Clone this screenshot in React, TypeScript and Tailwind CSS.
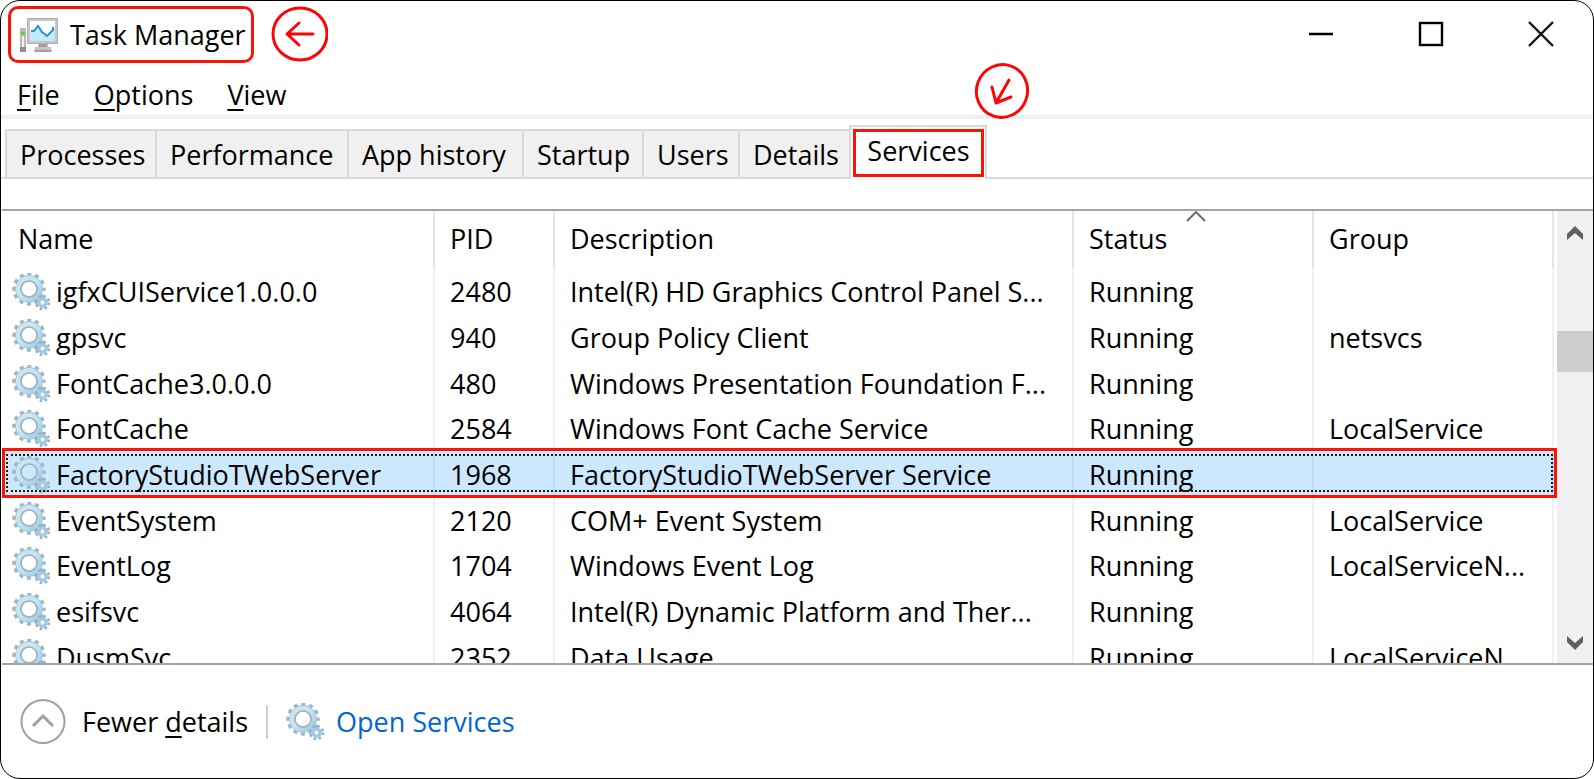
type Service = {
  name: string;
  pid: string;
  description: string;
  group: string;
};

const tabs = [
  { label: "Processes", width: "w-[150px]" },
  { label: "Performance", width: "w-[192px]" },
  { label: "App history", width: "w-[175px]" },
  { label: "Startup", width: "w-[120px]" },
  { label: "Users", width: "w-[96px]" },
  { label: "Details", width: "w-[111px]" },
];

const services: Service[] = [
  { name: "igfxCUIService1.0.0.0", pid: "2480", description: "Intel(R) HD Graphics Control Panel S...", group: "" },
  { name: "gpsvc", pid: "940", description: "Group Policy Client", group: "netsvcs" },
  { name: "FontCache3.0.0.0", pid: "480", description: "Windows Presentation Foundation F...", group: "" },
  { name: "FontCache", pid: "2584", description: "Windows Font Cache Service", group: "LocalService" },
  { name: "FactoryStudioTWebServer", pid: "1968", description: "FactoryStudioTWebServer Service", group: "" },
  { name: "EventSystem", pid: "2120", description: "COM+ Event System", group: "LocalService" },
  { name: "EventLog", pid: "1704", description: "Windows Event Log", group: "LocalServiceN..." },
  { name: "esifsvc", pid: "4064", description: "Intel(R) Dynamic Platform and Ther...", group: "" },
  { name: "DusmSvc", pid: "2352", description: "Data Usage", group: "LocalServiceN..." },
];

const selected = "FactoryStudioTWebServer";

function GearIcon() {
  return (
    <svg className="h-[38px] w-[38px] shrink-0" viewBox="0 0 38 38" fill="none" aria-hidden="true">
      <defs>
        <linearGradient id="gear" x1="0" y1="0" x2="1" y2="1">
          <stop offset="0" stopColor="#d3e6ef" />
          <stop offset="0.5" stopColor="#bfe5f5" />
          <stop offset="1" stopColor="#9fcbe4" />
        </linearGradient>
      </defs>
      <circle cx="17" cy="16" r="14.5" stroke="#9ab6cb" strokeWidth="4.4" strokeDasharray="3.9 3.69" strokeDashoffset="2" />
      <circle cx="17" cy="16" r="10.8" stroke="#a5c3d6" strokeWidth="6.2" />
      <circle cx="17" cy="16" r="10.9" stroke="url(#gear)" strokeWidth="4.4" />
      <circle cx="17" cy="16" r="8" stroke="#a2b2bd" strokeWidth="1.6" />
      <circle cx="30.5" cy="29.5" r="6.2" stroke="#94b2ca" strokeWidth="3" strokeDasharray="2.5 2.37" />
      <circle cx="30.5" cy="29.5" r="3.6" stroke="#a6c9de" strokeWidth="3.4" />
    </svg>
  );
}

function MonitorIcon() {
  return (
    <svg className="h-[34px] w-[38px] shrink-0" viewBox="0 0 38 34" fill="none" aria-hidden="true">
      <rect x="0" y="10" width="6" height="24" fill="#b9b9b9" />
      <rect x="0" y="29" width="6" height="5" fill="#8f8f8f" />
      <rect x="1" y="14" width="4" height="3" fill="#4fe01c" />
      <rect x="2" y="18" width="2" height="11" fill="#f0f0f0" />
      <rect x="7" y="0" width="31" height="26" fill="#b0b0b0" />
      <rect x="8" y="1" width="29" height="24" fill="#c6c6c6" />
      <rect x="10" y="3" width="25" height="20" fill="#fff" />
      <path d="M10 14l3-1 5-5 5 7 4 3 6-6 2-2v13H10z" fill="#c0ebfb" />
      <path d="M11 13h3l4-5 4 6 5 4 6-6v-3" stroke="#3290c6" strokeWidth="2" />
      <path d="M18 26h10v3h3v2h1v3H14v-3h1v-2h3z" fill="#c4c4c4" />
      <path d="M19 26h8v3h-8zM15 32h16v2H15z" fill="#9f9f9f" />
    </svg>
  );
}

function Scrollbar() {
  return (
    <div className="flex w-9 shrink-0 flex-col bg-[#f0f0f0]">
      <button type="button" aria-label="Scroll up" className="flex h-[44px] items-center justify-center">
        <svg className="h-4 w-[18px]" viewBox="0 0 18 16" aria-hidden="true">
          <path d="M9 1l8 8v6l-8-7-8 7V9z" fill="#606060" />
        </svg>
      </button>
      <div className="flex-1 pt-[76px]">
        <div className="h-[41px] bg-[#cdcdcd]" />
      </div>
      <button type="button" aria-label="Scroll down" className="flex h-[40px] items-center justify-center">
        <svg className="h-4 w-[18px]" viewBox="0 0 18 16" aria-hidden="true">
          <path d="M9 15l8-8V1L9 8 1 1v6z" fill="#606060" />
        </svg>
      </button>
    </div>
  );
}

export default function App() {
  return (
    <div className="h-screen bg-white font-['Open_Sans','Noto_Sans',sans-serif] text-[27px] leading-9 text-black">
      <div className="flex h-full flex-col overflow-hidden rounded-[20px] border border-black">
        <header className="flex h-[66px] shrink-0 items-center justify-between pr-[39px] pl-[7px]">
          <div className="flex items-center gap-4">
            <div className="flex h-[57px] w-[246px] items-center gap-3 rounded-[10px] border-3 border-[#fa1405] pt-[2px] pl-[9px]">
              <MonitorIcon />
              <h1 className="whitespace-nowrap">Task Manager</h1>
            </div>
            <svg className="h-[57px] w-[58px]" viewBox="0 0 58 57" fill="none" stroke="#fe0505" strokeWidth="3" aria-hidden="true">
              <ellipse cx="30" cy="28" rx="27" ry="26" />
              <path d="M43 28H17M29 17L17 28l12 11" strokeLinecap="round" strokeLinejoin="round" />
            </svg>
          </div>
          <div className="flex items-center gap-[84px]">
            <button type="button" aria-label="Minimize">
              <svg className="h-[26px] w-[26px]" viewBox="0 0 26 26" aria-hidden="true">
                <path d="M1 13h24" stroke="#000" strokeWidth="2.4" />
              </svg>
            </button>
            <button type="button" aria-label="Maximize">
              <svg className="h-[26px] w-[26px]" viewBox="0 0 26 26" fill="none" aria-hidden="true">
                <rect x="2" y="2" width="22" height="22" stroke="#000" strokeWidth="2.4" />
              </svg>
            </button>
            <button type="button" aria-label="Close">
              <svg className="h-[26px] w-[26px]" viewBox="0 0 26 26" aria-hidden="true">
                <path d="M1 1l24 24M25 1L1 25" stroke="#111" strokeWidth="2.4" />
              </svg>
            </button>
          </div>
        </header>

        <nav className="mt-[6px] flex h-[42px] shrink-0 items-center gap-[34px] pt-[2px] pl-4">
          <button type="button"><span className="underline decoration-2 underline-offset-4">F</span>ile</button>
          <button type="button"><span className="underline decoration-2 underline-offset-4">O</span>ptions</button>
          <button type="button"><span className="underline decoration-2 underline-offset-4">V</span>iew</button>
        </nav>
        <div className="h-1 shrink-0 bg-[#f0f0f0]" />

        <div role="tablist" className="flex h-[60px] shrink-0 items-end">
          <div className="w-1 border-b-2 border-[#d9d9d9]" />
          {tabs.map((tab) => (
            <button
              key={tab.label}
              type="button"
              role="tab"
              aria-selected="false"
              className={`h-[50px] border-y-2 border-l-2 border-[#d9d9d9] bg-[#f0f0f0] pt-[2px] pl-[13px] text-left whitespace-nowrap ${tab.width}`}
            >
              {tab.label}
            </button>
          ))}
          <div className="relative h-[54px] w-[138px] border-x-2 border-t-2 border-[#d9d9d9] p-[2px] pr-[1px]">
            <button
              type="button"
              role="tab"
              aria-selected="true"
              className="h-full w-full border-3 border-[#fa1405] pb-1 text-center"
            >
              Services
            </button>
            {/* callout pointing at the open tab */}
            <svg className="absolute -top-[66px] left-[120px] h-[60px] w-[60px]" viewBox="0 0 60 60" fill="none" stroke="#fe0505" strokeWidth="3" aria-hidden="true">
              <ellipse cx="31" cy="30" rx="25.5" ry="26.5" transform="rotate(20 31 30)" />
              <path d="M38 19L25 42M21 26l4 16 15-6" strokeLinecap="round" strokeLinejoin="round" />
            </svg>
          </div>
          <div className="flex-1 border-b-2 border-[#d9d9d9]" />
        </div>

        <main className="mt-[30px] ml-[1px] flex min-h-0 flex-1 overflow-hidden border-y-2 border-[#a3a3a3]">
          <div className="min-w-0 flex-1 overflow-hidden pr-[3px]">
            <table className="h-[468px] w-full table-fixed border-separate border-spacing-0 text-left whitespace-nowrap">
              <colgroup>
                <col className="w-[433px]" />
                <col className="w-[120px]" />
                <col />
                <col className="w-[240px]" />
                <col className="w-[240px]" />
              </colgroup>
              <thead>
                <tr className="h-[57px] *:border-r-2 *:border-[#e5e5e5] *:p-0 *:pb-[2px] *:font-normal">
                  <th className="pl-4!">Name</th>
                  <th className="pl-[15px]!">PID</th>
                  <th className="pl-[15px]!">Description</th>
                  <th className="relative pl-[15px]!" aria-sort="ascending">
                    Status
                    <svg className="absolute top-0 left-[112px] h-3 w-5" viewBox="0 0 20 12" fill="none" aria-hidden="true">
                      <path d="M1 10l9-9 9 9" stroke="#6d6d6d" strokeWidth="2" />
                    </svg>
                  </th>
                  <th className="pl-[15px]!">Group</th>
                </tr>
              </thead>
              <tbody>
                {services.map((service) => {
                  const active = service.name === selected;
                  return (
                    <tr
                      key={service.name}
                      aria-selected={active}
                      className={
                        active
                          ? "relative bg-[#cce8ff] *:border-r-2 *:border-[#bcdcff] *:p-0 *:pt-[3px]"
                          : "*:border-r-2 *:border-[#e8f2fd] *:p-0 *:pt-[3px]"
                      }
                    >
                      <td className="pl-[10px]!">
                        <div className="flex items-center gap-[6px]">
                          <GearIcon />
                          {service.name}
                        </div>
                        {active && (
                          <div className="pointer-events-none absolute -top-[3px] -right-[3px] -bottom-[2px] left-0 border-3 border-[#fa1405] px-[1px] py-[3px]">
                            <div className="h-full border-2 border-dotted border-[#2b1a08]" />
                          </div>
                        )}
                      </td>
                      <td className="pl-[15px]!">{service.pid}</td>
                      <td className="pl-[15px]!">{service.description}</td>
                      <td className="pl-[15px]!">Running</td>
                      <td className="pl-[15px]!">{service.group}</td>
                    </tr>
                  );
                })}
              </tbody>
            </table>
          </div>
          <Scrollbar />
        </main>

        <footer className="flex h-[113px] shrink-0 items-center pl-[19px]">
          <button type="button" className="flex items-center gap-4">
            <svg className="h-[46px] w-[46px]" viewBox="0 0 46 46" fill="none" stroke="#a0a0a0" strokeWidth="2" aria-hidden="true">
              <circle cx="23" cy="22.5" r="21.5" />
              <path d="M13 27l10-10 10 10" strokeWidth="3" />
            </svg>
            <span>
              Fewer <span className="underline decoration-2 underline-offset-4">d</span>etails
            </span>
          </button>
          <div className="ml-[18px] h-[34px] w-[2px] bg-[#cfcfcf]" />
          <a href="#services" className="ml-[18px] flex items-center gap-3 text-[#0066d4]">
            <GearIcon />
            Open Services
          </a>
        </footer>
      </div>
    </div>
  );
}
